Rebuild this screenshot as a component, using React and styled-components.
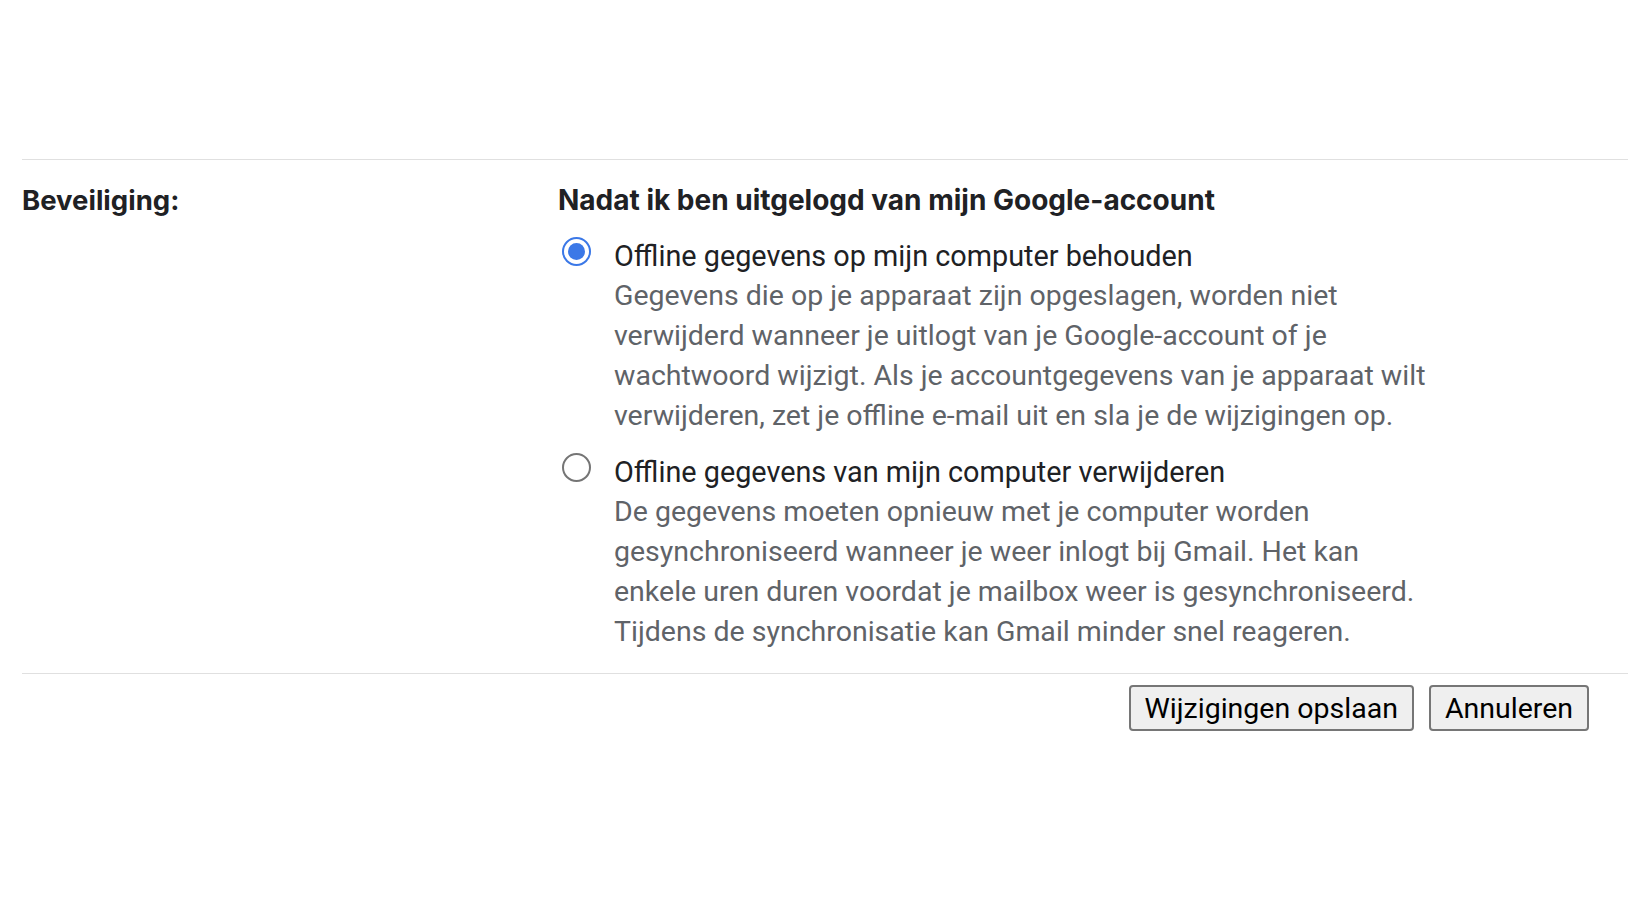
import React, { useState } from "react";
import styled, { createGlobalStyle } from "styled-components";

const GlobalStyle = createGlobalStyle`
  html, body {
    margin: 0;
    padding: 0;
    background: #ffffff;
  }
  body {
    font-family: Roboto, "Noto Sans", Arial, sans-serif;
    color: #202124;
  }
`;

const Page = styled.div`
  padding: 159px 0 0 22px;
  min-height: 916px;
  box-sizing: border-box;
`;

const SettingRow = styled.section`
  display: grid;
  grid-template-columns: 536px 1fr;
  border-top: 1px solid #e0e0e0;
  border-bottom: 1px solid #e0e0e0;
  padding: 20px 0 21px;
`;

const RowLabel = styled.div`
  font-family: Inter, Roboto, sans-serif;
  font-size: 27.5px;
  font-weight: 700;
  line-height: 40px;
  color: #202124;
`;

const RowBody = styled.div`
  display: flex;
  flex-direction: column;
  gap: 16px;
`;

const Heading = styled.div`
  font-family: Inter, Roboto, sans-serif;
  font-size: 28px;
  font-weight: 700;
  line-height: 40px;
  color: #202124;
`;

const Option = styled.label`
  display: flex;
  align-items: flex-start;
  gap: 23px;
  padding-left: 4px;
  cursor: pointer;
`;

const RadioCircle = styled.span`
  flex: none;
  box-sizing: border-box;
  width: 29px;
  height: 29px;
  margin-top: 1px;
  border-radius: 50%;
  border: 2px solid ${(p) => (p.$checked ? "#3b78e7" : "#757575")};
  display: flex;
  align-items: center;
  justify-content: center;

  &::after {
    content: "";
    width: 17px;
    height: 17px;
    border-radius: 50%;
    background: #3b78e7;
    display: ${(p) => (p.$checked ? "block" : "none")};
  }
`;

const HiddenInput = styled.input`
  position: absolute;
  opacity: 0;
  width: 0;
  height: 0;
`;

const OptionText = styled.div`
  display: flex;
  flex-direction: column;
`;

const OptionTitle = styled.div`
  font-size: 28.8px;
  line-height: 40px;
  color: #202124;
  white-space: nowrap;
`;

const OptionDesc = styled.div`
  font-size: 28.5px;
  line-height: 40px;
  color: #5f6368;
  white-space: nowrap;
`;

const Actions = styled.div`
  display: flex;
  justify-content: flex-end;
  gap: 15px;
  padding: 11px 39px 0 0;
`;

const Button = styled.button`
  font-family: Roboto, Arial, sans-serif;
  font-size: 28.5px;
  color: #000000;
  background: #efefef;
  border: 2px solid #767676;
  border-radius: 4px;
  height: 46px;
  padding: 0 14px;
  cursor: pointer;
`;

const options = [
  {
    id: "keep",
    title: "Offline gegevens op mijn computer behouden",
    lines: [
      "Gegevens die op je apparaat zijn opgeslagen, worden niet",
      "verwijderd wanneer je uitlogt van je Google-account of je",
      "wachtwoord wijzigt. Als je accountgegevens van je apparaat wilt",
      "verwijderen, zet je offline e-mail uit en sla je de wijzigingen op.",
    ],
  },
  {
    id: "remove",
    title: "Offline gegevens van mijn computer verwijderen",
    lines: [
      "De gegevens moeten opnieuw met je computer worden",
      "gesynchroniseerd wanneer je weer inlogt bij Gmail. Het kan",
      "enkele uren duren voordat je mailbox weer is gesynchroniseerd.",
      "Tijdens de synchronisatie kan Gmail minder snel reageren.",
    ],
  },
];

export default function App() {
  const [choice, setChoice] = useState("keep");
  return (
    <Page>
      <GlobalStyle />
      <SettingRow>
        <RowLabel>Beveiliging:</RowLabel>
        <RowBody>
          <Heading>Nadat ik ben uitgelogd van mijn Google-account</Heading>
          {options.map((o) => (
            <Option key={o.id}>
              <HiddenInput
                type="radio"
                name="offline"
                checked={choice === o.id}
                onChange={() => setChoice(o.id)}
              />
              <RadioCircle $checked={choice === o.id} />
              <OptionText>
                <OptionTitle>{o.title}</OptionTitle>
                {o.lines.map((l) => (
                  <OptionDesc key={l}>{l}</OptionDesc>
                ))}
              </OptionText>
            </Option>
          ))}
        </RowBody>
      </SettingRow>
      <Actions>
        <Button>Wijzigingen opslaan</Button>
        <Button>Annuleren</Button>
      </Actions>
    </Page>
  );
}
